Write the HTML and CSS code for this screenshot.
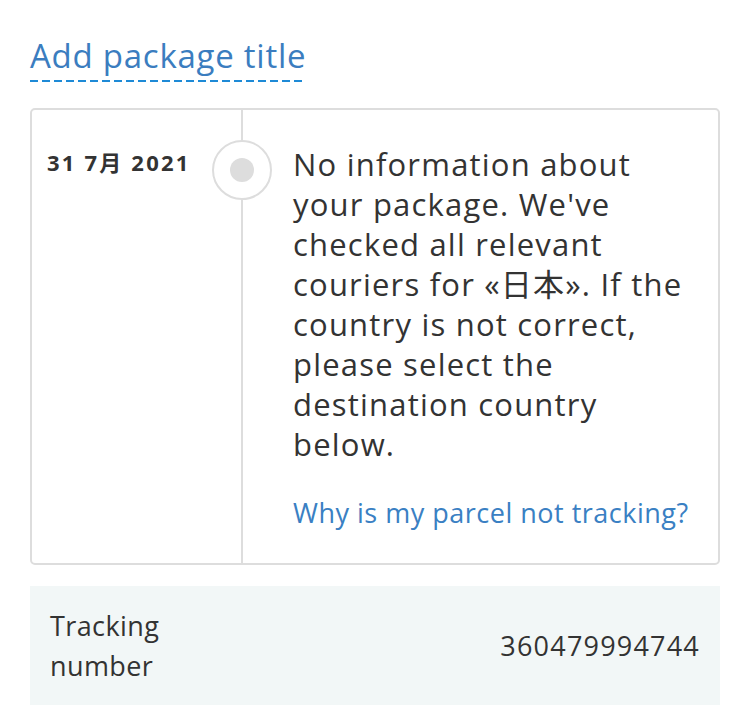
FILE: index.html
```html
<!DOCTYPE html>
<html lang="en">
<head>
<meta charset="utf-8">
<link rel="stylesheet" href="styles.css">
</head>
<body>
<div class="page">
  <h1 class="title"><span class="title-text">Add package title</span></h1>
  <div class="card">
    <div class="date-col"><span class="date">31 7月 2021</span></div>
    <div class="info-col">
      <span class="dot"><span class="dot-inner"></span></span>
      <p class="msg">No information about your package. We've checked all relevant couriers for «日本». If the country is not correct, please select the destination country below.</p>
      <a class="why" href="#">Why is my parcel not tracking?</a>
    </div>
  </div>
  <div class="tracking">
    <div class="label">Tracking<br>number</div>
    <div class="num">360479994744</div>
  </div>
</div>
</body>
</html>
```
FILE: styles.css
```css
html, body {
  margin: 0;
  padding: 0;
  background: #fff;
}
body {
  font-family: "Open Sans", "Noto Sans CJK JP", sans-serif;
  color: #333;
}
.page {
  padding: 36px 30px 0 30px;
}
.title {
  margin: 0;
  font-size: 33px;
  font-weight: 400;
  line-height: 40px;
}
.title-text {
  display: inline-block;
  color: #3b7dbf;
  letter-spacing: 0.75px;
  padding-bottom: 6px;
  background-image: repeating-linear-gradient(90deg, #1e8ad6 0 8px, transparent 8px 12px);
  background-size: 100% 2px;
  background-repeat: no-repeat;
  background-position: left bottom;
}
.card {
  margin-top: 26px;
  display: grid;
  grid-template-columns: 211px 1fr;
  border: 2px solid #ddd;
  border-radius: 5px;
}
.date-col {
  border-right: 2px solid #ddd;
  padding: 38px 0 0 15px;
}
.date {
  font-size: 22px;
  font-weight: 700;
  letter-spacing: 2.2px;
  line-height: 28px;
}
.info-col {
  position: relative;
  padding: 34px 26px 33px 50px;
}
.dot {
  position: absolute;
  left: -31px;
  top: 30px;
  width: 56px;
  height: 56px;
  border: 2px solid #ddd;
  border-radius: 50%;
  background: #fff;
  display: flex;
  align-items: center;
  justify-content: center;
}
.dot-inner {
  width: 24px;
  height: 24px;
  border-radius: 50%;
  background: #ddd;
}
.msg {
  margin: 0;
  font-size: 31px;
  letter-spacing: 1.2px;
  line-height: 40px;
}
.why {
  display: block;
  margin-top: 32px;
  font-size: 27px;
  letter-spacing: 0.5px;
  line-height: 34px;
  color: #3a80c3;
  text-decoration: none;
}
.tracking {
  margin-top: 21px;
  background: #f2f7f7;
  padding: 20px 20px 19px 20px;
  display: flex;
  justify-content: space-between;
  align-items: center;
  font-size: 27px;
  line-height: 40px;
}
.label {
  letter-spacing: 0.4px;
}
.num {
  letter-spacing: 1.2px;
}
```
